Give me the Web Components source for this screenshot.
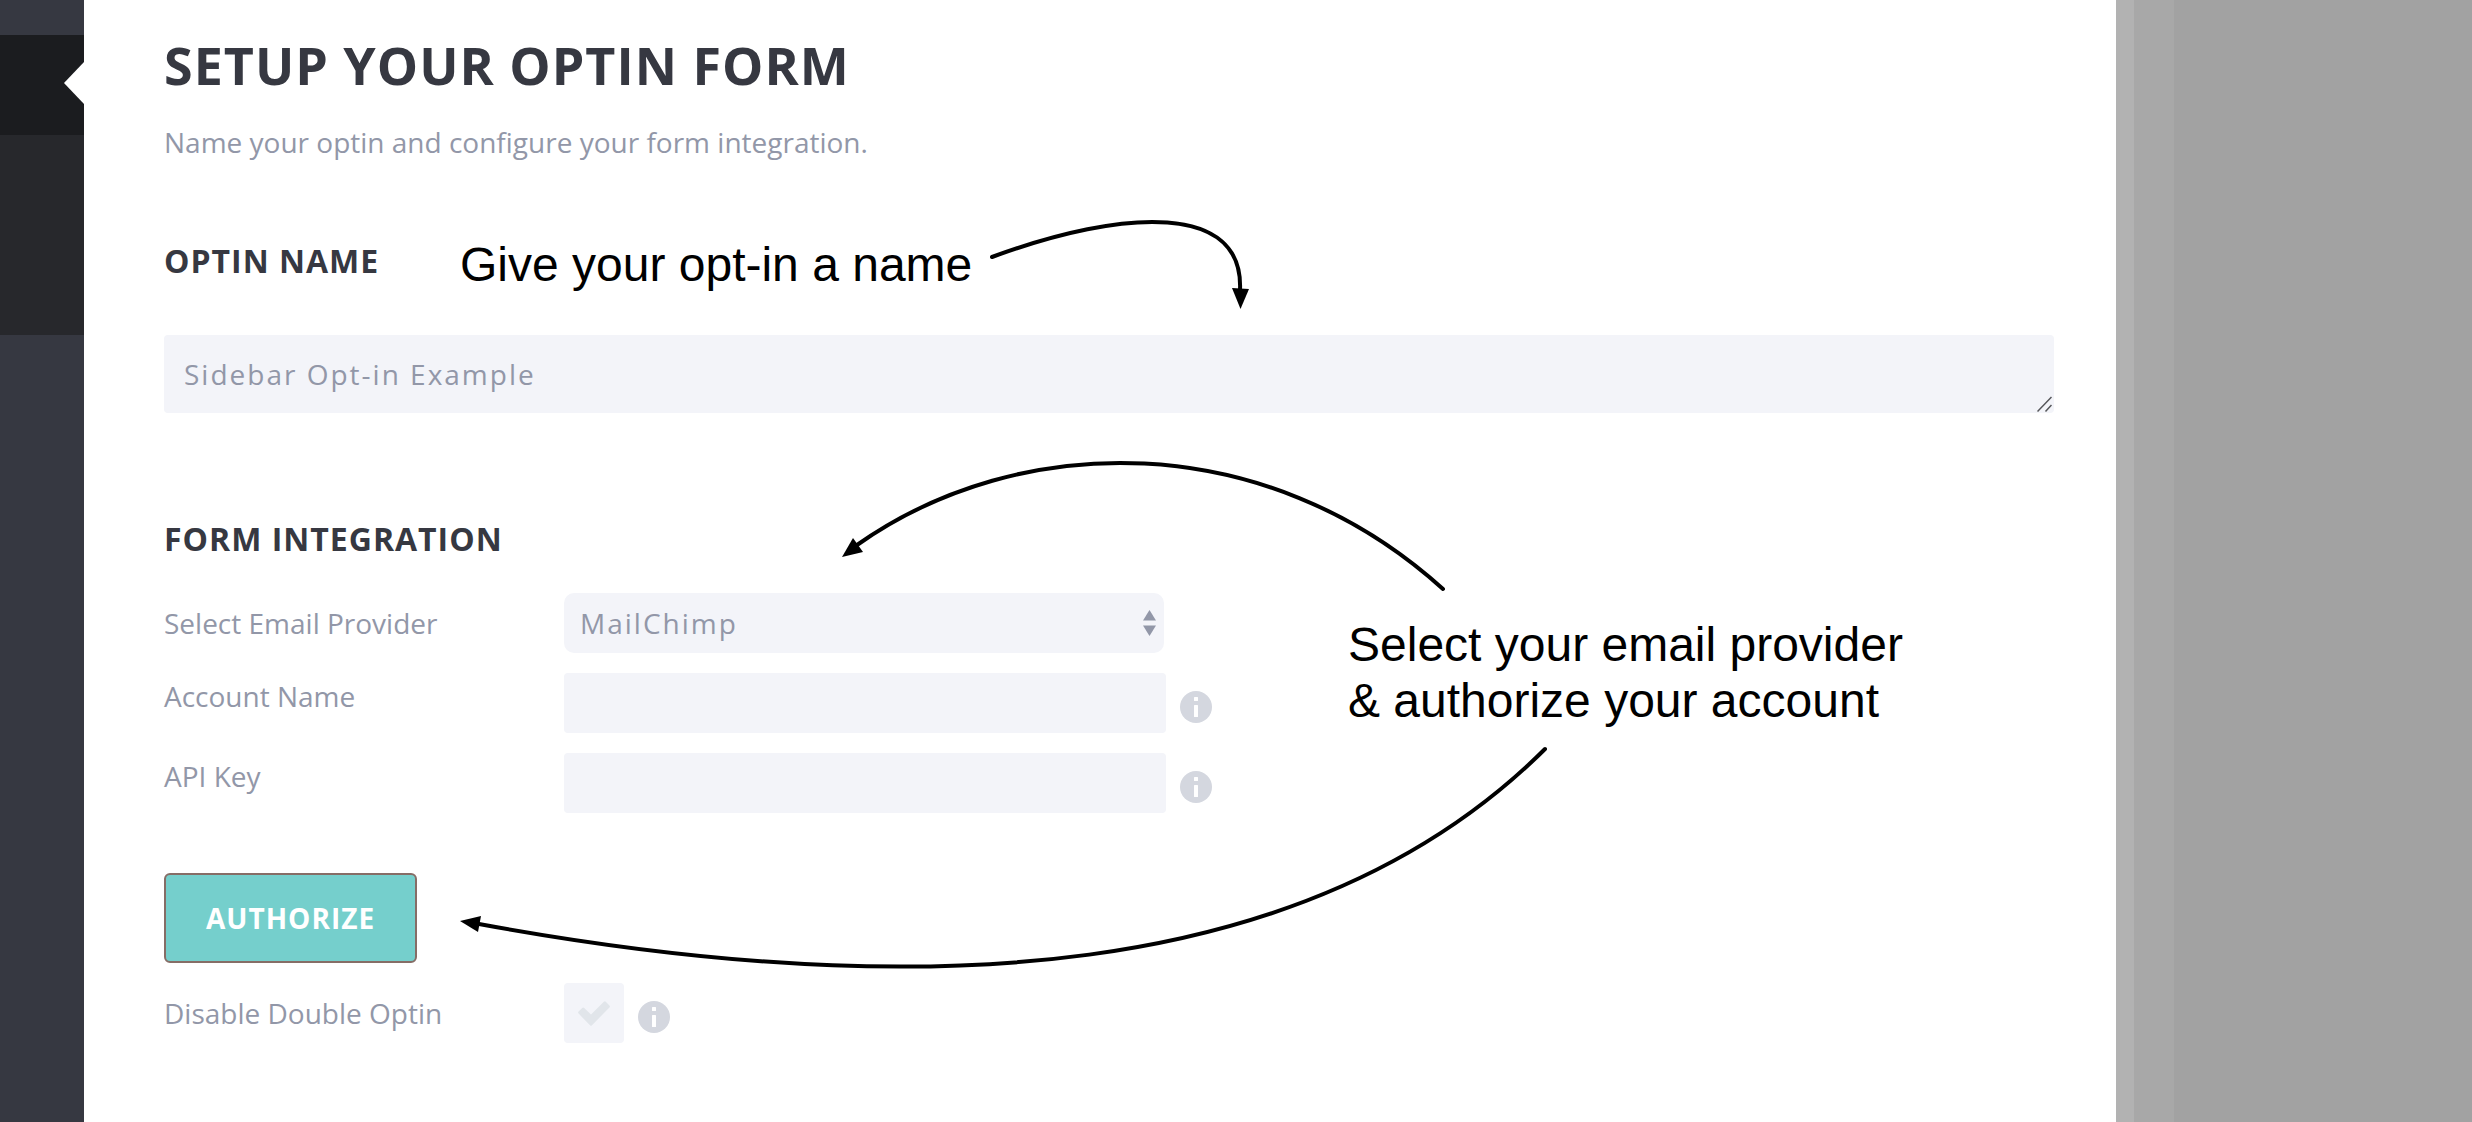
<!DOCTYPE html>
<html lang="en">
<head>
<meta charset="utf-8">
<title>Setup your optin form</title>
<style>
    body {
        margin: 0;
        font-family: "Open Sans", sans-serif;
        font-size: 28px;
        color: #9297a8;
        background: #a2a2a2;
    }
</style>
</head>
<body>

<template id="optin-page-template">
    <style>
        :host {
            display: grid;
            grid-template-columns: 84px 1fr 356px;
            min-height: 100vh;
        }
        main {
            position: relative;
            background: #fff;
            padding: 35px 62px 40px 80px;
        }
    </style>
    <side-menu></side-menu>
    <main><slot></slot></main>
    <page-backdrop></page-backdrop>
</template>

<template id="side-menu-template">
    <style>
        :host {
            display: block;
            background: #363841;
            padding-top: 35px;
        }
        .current {
            display: flex;
            align-items: center;
            justify-content: flex-end;
            height: 100px;
            background: #1b1c1f;
        }
        .current svg {
            display: block;
            margin-top: -4px;
        }
        .submenu {
            height: 200px;
            background: #27282c;
        }
    </style>
    <nav aria-label="Menu">
        <div class="current"><svg width="20" height="42" viewBox="0 0 20 42"><path d="M20 0v42L0 21z" fill="#fff"/></svg></div>
        <div class="submenu"></div>
    </nav>
</template>

<template id="page-backdrop-template">
    <style>
        :host {
            display: flex;
        }
        .edge {
            width: 18px;
            background: #b2b2b2;
        }
        .gutter {
            width: 40px;
            background: #a8a8a8;
        }
    </style>
    <div class="edge"></div>
    <div class="gutter"></div>
</template>

<template id="page-title-template">
    <style>
        :host {
            display: block;
            margin-bottom: 77px;
        }
        h1 {
            margin: 0 0 27px;
            font-size: 52px;
            line-height: 60px;
            font-weight: 700;
            letter-spacing: 1px;
            text-transform: uppercase;
            color: #363841;
        }
        p {
            margin: 0;
            line-height: 40px;
        }
    </style>
    <h1><slot name="title"></slot></h1>
    <p><slot></slot></p>
</template>

<template id="section-title-template">
    <style>
        :host {
            display: block;
        }
        h2 {
            margin: 0;
            font-size: 32px;
            line-height: 44px;
            font-weight: 700;
            letter-spacing: 1px;
            text-transform: uppercase;
            color: #363841;
        }
    </style>
    <h2><slot></slot></h2>
</template>

<template id="name-field-template">
    <style>
        :host {
            display: block;
            margin-bottom: 104px;
        }
        label {
            display: block;
            margin-bottom: 52px;
        }
        .box {
            position: relative;
        }
        textarea {
            display: block;
            box-sizing: border-box;
            width: 100%;
            height: 78px;
            padding: 19px 20px;
            border: 0;
            border-radius: 4px;
            background: #f3f4f9;
            color: inherit;
            font: inherit;
            line-height: 40px;
            letter-spacing: 2px;
            overflow: hidden;
            resize: vertical;
        }
        textarea::-webkit-resizer {
            background: transparent;
        }
        svg {
            position: absolute;
            right: 2px;
            bottom: 1px;
            pointer-events: none;
        }
    </style>
    <label for="name"><slot></slot></label>
    <div class="box">
        <textarea id="name" rows="1"></textarea>
        <svg width="15" height="16" viewBox="0 0 15 16" fill="none" stroke="#55565a" stroke-width="1.500"><path d="M.5 15.500 14.500 1M8.500 15.500l6-6.500"/></svg>
    </div>
</template>

<template id="provider-field-template">
    <style>
        :host {
            display: flex;
            margin: 32px 0 20px;
        }
        label {
            width: 400px;
            line-height: 60px;
        }
        .box {
            position: relative;
            width: 600px;
        }
        select {
            display: block;
            width: 100%;
            height: 60px;
            padding: 0 16px;
            border: 0;
            border-radius: 10px;
            appearance: none;
            background: #f3f4f9;
            color: inherit;
            font: inherit;
            letter-spacing: 2px;
        }
        svg {
            position: absolute;
            top: 17px;
            right: 8px;
            pointer-events: none;
        }
    </style>
    <label for="provider"><slot></slot></label>
    <div class="box">
        <select id="provider"><option>MailChimp</option></select>
        <svg width="13" height="26" viewBox="0 0 13 26" fill="#9297a8"><path d="M6.5 0L13 10.500H0z"/><path d="M0 15.500h13L6.500 26z"/></svg>
    </div>
</template>

<template id="text-field-template">
    <style>
        :host {
            display: flex;
            margin-bottom: 20px;
        }
        label {
            width: 400px;
            line-height: 46px;
        }
        input {
            box-sizing: border-box;
            width: 602px;
            height: 60px;
            padding: 0 20px;
            border: 0;
            border-radius: 4px;
            background: #f3f4f9;
            color: inherit;
            font: inherit;
            letter-spacing: 2px;
        }
        info-icon {
            margin: 18px 0 0 14px;
        }
    </style>
    <label for="field"><slot></slot></label>
    <input id="field" type="text">
    <info-icon></info-icon>
</template>

<template id="tick-field-template">
    <style>
        :host {
            display: flex;
        }
        label {
            width: 400px;
            line-height: 60px;
        }
        .box {
            position: relative;
        }
        input {
            display: block;
            width: 60px;
            height: 60px;
            margin: 0;
            border-radius: 4px;
            appearance: none;
            background: #f3f4f9;
        }
        svg {
            position: absolute;
            top: 18px;
            left: 14px;
            pointer-events: none;
        }
        input:checked + svg {
            fill: #75cfcc;
        }
        info-icon {
            margin: 18px 0 0 14px;
        }
    </style>
    <label for="tick"><slot></slot></label>
    <div class="box">
        <input id="tick" type="checkbox">
        <svg width="32" height="25" viewBox="0 0 32 25" fill="#e1e5ea"><path d="M.6 10.600 4.200 7q1-1 2 0l6.800 6.600L25.800.7q1-1 2 0l3.600 3.700q1 1 0 2L14 24.300q-1 1-2 0L.6 12.600q-1-1 0-2z"/></svg>
    </div>
    <info-icon></info-icon>
</template>

<template id="info-icon-template">
    <style>
        :host {
            display: block;
            width: 32px;
            height: 32px;
        }
        svg {
            display: block;
        }
    </style>
    <svg width="32" height="32" viewBox="0 0 32 32"><circle cx="16" cy="16" r="16" fill="#d4d7df"/><rect x="14" y="6" width="4" height="4" rx=".5" fill="#fff"/><rect x="14" y="14" width="4" height="12" rx=".5" fill="#fff"/></svg>
</template>

<template id="action-button-template">
    <style>
        :host {
            display: block;
            margin: 60px 0 20px;
        }
        button {
            display: block;
            height: 90px;
            padding: 0 40px;
            border: 2px solid #866d66;
            border-radius: 6px;
            background: #75cfcc;
            color: #fff;
            font: inherit;
            font-weight: 700;
            letter-spacing: 1px;
            text-transform: uppercase;
        }
    </style>
    <button type="button"><slot></slot></button>
</template>

<!-- notes and arrows drawn over the form -->
<template id="guide-notes-template">
    <style>
        :host {
            position: absolute;
            top: 0;
            left: 0;
            color: #000;
            font: 48px/56px "Liberation Sans", Arial, sans-serif;
            white-space: nowrap;
            pointer-events: none;
        }
        svg {
            display: block;
        }
        .name, .provider {
            position: absolute;
        }
        .name {
            top: 237px;
            left: 376px;
        }
        .provider {
            top: 617px;
            left: 1264px;
        }
    </style>
    <svg width="1500" height="1000" viewBox="84 0 1500 1000" fill="none" stroke="#000" stroke-width="4" stroke-linecap="round">
        <path d="M992 257C1125 208 1244 203 1240 290"/>
        <path d="M1443 589C1265 428 1020 430 857 545"/>
        <path d="M1545 749C1310 983 920 1005 479 924"/>
        <g fill="#000" stroke="none">
            <path d="M1232 288l17 1-8.500 20z"/>
            <path d="M853 538l10 14-21 5z"/>
            <path d="M481 916l-3 16-18-11z"/>
        </g>
    </svg>
    <div class="name"><slot name="name"></slot></div>
    <div class="provider"><slot name="provider"></slot></div>
</template>

<optin-page>
    <page-title>
        <span slot="title">Setup your optin form</span>
        Name your optin and configure your form integration.
    </page-title>
    <name-field value="Sidebar Opt-in Example"><section-title>Optin name</section-title></name-field>
    <section-title>Form integration</section-title>
    <provider-field>Select Email Provider</provider-field>
    <text-field>Account Name</text-field>
    <text-field>API Key</text-field>
    <action-button>Authorize</action-button>
    <tick-field>Disable Double Optin</tick-field>
    <guide-notes>
        <span slot="name">Give your opt-in a name</span>
        <span slot="provider">Select your email provider<br>&amp; authorize your account</span>
    </guide-notes>
</optin-page>

<script>
class TemplateElement extends HTMLElement {
    constructor() {
        super();
        const template = document.querySelector('#' + this.localName + '-template');
        this.attachShadow({mode: 'open'});
        this.shadowRoot.appendChild(template.content.cloneNode(true));
    }
}

class NameField extends TemplateElement {
    connectedCallback() {
        this.shadowRoot.querySelector('textarea').value = this.getAttribute('value') || '';
    }
}

customElements.define('optin-page', class OptinPage extends TemplateElement {});
customElements.define('side-menu', class SideMenu extends TemplateElement {});
customElements.define('page-backdrop', class PageBackdrop extends TemplateElement {});
customElements.define('page-title', class PageTitle extends TemplateElement {});
customElements.define('section-title', class SectionTitle extends TemplateElement {});
customElements.define('name-field', NameField);
customElements.define('provider-field', class ProviderField extends TemplateElement {});
customElements.define('text-field', class TextField extends TemplateElement {});
customElements.define('tick-field', class TickField extends TemplateElement {});
customElements.define('info-icon', class InfoIcon extends TemplateElement {});
customElements.define('action-button', class ActionButton extends TemplateElement {});
customElements.define('guide-notes', class GuideNotes extends TemplateElement {});
</script>
</body>
</html>
